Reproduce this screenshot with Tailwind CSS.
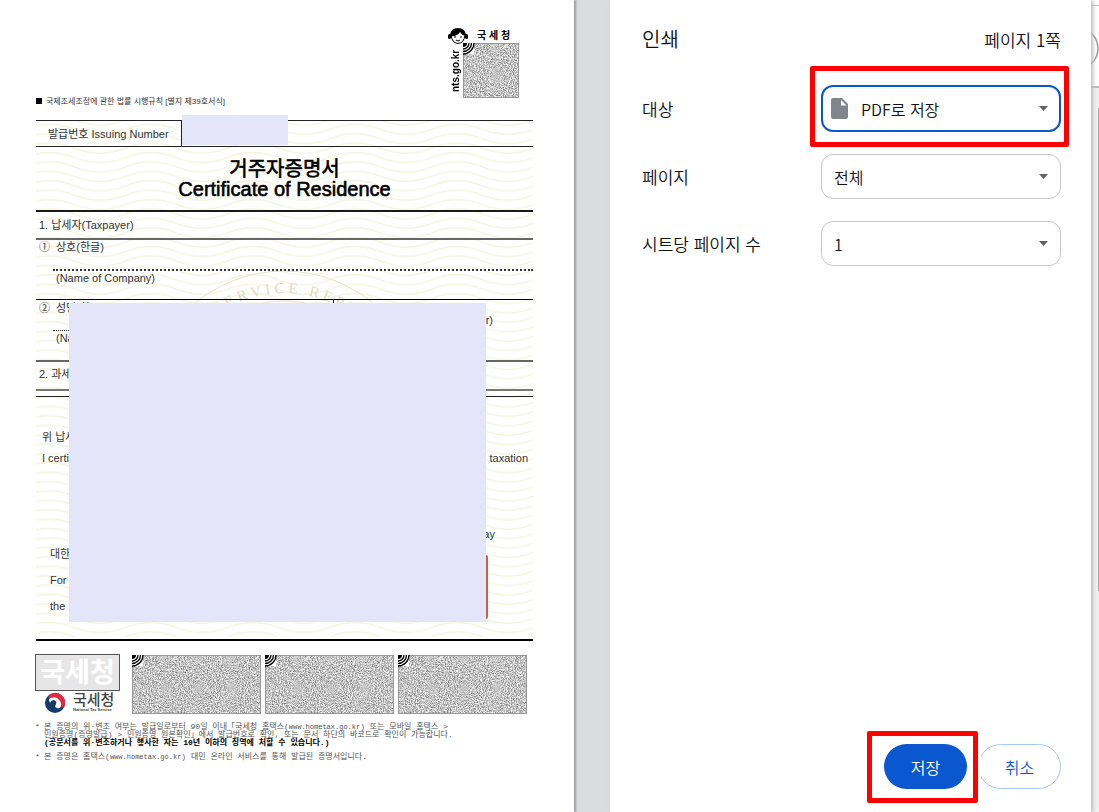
<!DOCTYPE html>
<html lang="ko">
<head>
  <meta charset="UTF-8">
  <meta name="viewport" content="width=device-width, initial-scale=1.0" />
  <script src="https://cdn.jsdelivr.net/npm/@tailwindcss/browser@4"></script>
  <title>인쇄</title>
</head>
<body class="flex min-h-screen overflow-x-hidden bg-white font-['Noto_Sans_CJK_KR',sans-serif] text-[#111]">

<svg class="absolute" width="0" height="0" aria-hidden="true">
  <defs>
    <filter id="grain" x="0" y="0" width="100%" height="100%" color-interpolation-filters="sRGB">
      <feTurbulence type="fractalNoise" baseFrequency="0.97" numOctaves="3" seed="4" />
      <feColorMatrix values="1 0 0 0 0.27  1 0 0 0 0.27  1 0 0 0 0.27  0 0 0 0 1" />
    </filter>
    <pattern id="waves" width="102" height="9.4" patternUnits="userSpaceOnUse" x="13">
      <path d="M-25.5 -9.4 Q0 -19.4 25.5 -9.4 T76.5 -9.4 T127.5 -9.4 M-25.5 0 Q0 -10 25.5 0 T76.5 0 T127.5 0 M-25.5 9.4 Q0 -.6 25.5 9.4 T76.5 9.4 T127.5 9.4 M-25.5 18.8 Q0 8.800 25.5 18.8 T76.5 18.8 T127.5 18.8" fill="none" stroke="#f5f5e2" stroke-width="1.6" />
    </pattern>
    <g id="corner">
      <rect width="11" height="11" fill="#fff" />
      <path d="M0 0H4A4 4 0 0 1 0 4Z" />
      <path d="M6 0A6 6 0 0 1 0 6M8.500 0A8.500 8.500 0 0 1 0 8.500M11 0A11 11 0 0 1 0 11" fill="none" stroke="#000" stroke-width="1.300" />
    </g>
  </defs>
</svg>

<!-- preview -->
<main class="flex flex-1 bg-[#dadce0] pr-9">
  <article class="flex-1 bg-white pr-[41px] pl-9 font-['Liberation_Sans','Noto_Sans_CJK_KR',sans-serif] text-[11px] leading-4 text-[#333] shadow-[2px_0_2px_#9a9ca0]">
    <header class="flex h-[120px] items-end justify-between">
      <p class="pb-2.5 text-[8px] leading-4"><span class="mr-1 inline-block size-1.5 bg-black"></span>국제조세조정에 관한 법률 시행규칙 [별지 제39호서식]</p>
      <div class="mr-3.5 mb-[22px] grid grid-cols-[15px_56px] grid-rows-[15px_55px] text-black">
        <svg class="col-start-1 h-4 w-5" viewBox="0 0 20 16" aria-hidden="true">
          <path d="M2 7Q3 0 10 0Q17 0 18 7Q15 9 12 4Q9 9 2 8Z" />
          <path d="M3 7Q4 15 10 15.500Q16 15 17 7" fill="none" stroke="#000" stroke-width="1" />
          <rect x="0" y="6" width="3" height="5" rx="1.500" />
          <rect x="17" y="6" width="3" height="5" rx="1.500" />
          <path d="M6 9h2M12 9h2M8 12Q10 14 12 12" fill="none" stroke="#000" stroke-width="1" />
        </svg>
        <b class="pl-3.5 text-[10px] leading-4">국 세 청</b>
        <b class="rotate-180 pt-1.5 text-[10px] leading-[15px] [writing-mode:vertical-rl]">nts.go.kr</b>
        <svg class="h-[55px] w-14" viewBox="0 0 56 55" aria-hidden="true">
          <rect width="56" height="55" filter="url(#grain)" />
          <rect x=".5" y=".5" width="55" height="54" fill="none" stroke="#999" />
          <use href="#corner" />
        </svg>
      </div>
    </header>

    <section class="relative isolate">
      <svg class="absolute inset-x-0 top-0 -z-10 h-[517px] w-full" aria-hidden="true">
        <rect width="100%" height="100%" fill="url(#waves)" />
        <g fill="none" stroke="#e6e2cc">
          <circle cx="248" cy="290" r="139" />
          <circle cx="248" cy="290" r="109" />
          <path id="ring" d="M131 290A117 117 0 0 1 365 290" stroke="none" />
        </g>
        <text fill="#e0dcc2" font-family="Liberation Serif, serif" font-size="15"><textPath href="#ring" startOffset="48%" text-anchor="middle">T A X&#160; S E R V I C E&#160;&#160; R E P U B L</textPath></text>
      </svg>

      <div class="flex h-[26px] items-center border-t border-[#222]">
        <div class="flex h-full w-[146px] items-center border-r border-[#222] pl-3">발급번호 Issuing Number</div>
        <div class="-mt-2 h-[30px] w-[106px] bg-[#e4e5f9]"></div>
      </div>
      <h1 class="h-16 border-t border-[#222] pt-3 text-center text-[20px] leading-5 text-black [-webkit-text-stroke:0.600px_black]">거주자증명서<br>Certificate of Residence</h1>
      <div class="h-7 border-t-2 border-black/90 pt-[5px] pl-[3px]">1. 납세자(Taxpayer)</div>
      <div class="h-[61px] border-t-2 border-[#666] pl-[3px]">
        <div class="-mt-px flex h-[30px] gap-1.5"><span>①</span><span>상호(한글)</span></div>
        <div class="ml-3.5 border-t-2 border-dotted border-[#333] pl-[3px] leading-3.5">(Name of Company)</div>
      </div>
      <div class="h-[61px] border-t border-black pl-[3px]">
        <div class="flex h-[30px] gap-1.5"><span>②</span><span>성명(한글)</span></div>
        <div class="mr-48 ml-3.5 border-t border-dotted border-[#333] pl-[3px] leading-3.5">(Name of Representative)</div>
      </div>
      <div class="h-[29px] border-t-2 border-[#666] pt-1 pl-[3px]">2. 과세연도</div>
      <div class="h-[7px] border-t-2 border-[#777]"></div>
      <div class="h-[243px] border-t border-[#222] pt-8 pl-1.5">
        <p>위 납세자</p>
        <div class="mt-[5px] flex justify-between pr-[5px]"><span>I certify</span><span>purpose of Korean taxation</span></div>
        <div class="mt-20 ml-2 flex flex-col gap-2.5">
          <p>대한민국</p>
          <p>For</p>
          <p>the</p>
        </div>
      </div>
      <div class="border-t-2 border-black"></div>

      <!-- masked area -->
      <span class="absolute top-48 right-10">Taxpayer)</span>
      <span class="absolute top-[406px] right-[38px]">month / day</span>
      <i class="absolute top-[179px] left-[297px] h-4 w-px bg-[#222]"></i>
      <i class="absolute top-[435px] right-[45px] h-16 w-1 rounded-sm bg-[#cf5a48]"></i>
      <div class="absolute top-[183px] right-[47px] bottom-[19px] left-[33px] bg-[#e4e5f9]"></div>
    </section>

    <footer class="-ml-px pt-[13px]">
      <div class="flex">
        <div class="w-[85px]">
          <div class="flex h-[37px] items-center justify-center border border-[#555] bg-[#e6e6e6] text-[27px] font-bold text-white">국세청</div>
          <div class="flex gap-2 pt-px pl-2.5">
            <svg class="h-[22px] w-5" viewBox="0 0 20 22" aria-hidden="true">
              <circle cx="10" cy="11" r="10" fill="#123b68" />
              <path d="M5 2.300A10 10 0 0 1 19.600 14Q18 16 16 15Q17 9 12 6Q8 4 4 7Q3 4 5 2.300Z" fill="#e02a42" />
              <path d="M4 7Q8 4 12 6Q17 9 16 14Q15 17 12 16Q9 15 11 12Q12 9 9 8Q6 8 5 11Q4 9 4 7Z" fill="#fff" />
            </svg>
            <div class="whitespace-nowrap text-[#444]">
              <p class="text-[15px] leading-4 font-medium">국세청</p>
              <p class="text-[4px] leading-1 font-bold">National Tax Service</p>
            </div>
          </div>
        </div>
        <div class="flex gap-1 pt-px pl-3">
          <svg class="h-[59px] w-[129px]" viewBox="0 0 129 59" aria-hidden="true"><rect width="129" height="59" filter="url(#grain)" /><rect x=".5" y=".5" width="128" height="58" fill="none" stroke="#999" /><use href="#corner" /></svg>
          <svg class="h-[59px] w-[129px]" viewBox="0 0 129 59" aria-hidden="true"><rect width="129" height="59" filter="url(#grain)" /><rect x=".5" y=".5" width="128" height="58" fill="none" stroke="#999" /><use href="#corner" /></svg>
          <svg class="h-[59px] w-[129px]" viewBox="0 0 129 59" aria-hidden="true"><rect width="129" height="59" filter="url(#grain)" /><rect x=".5" y=".5" width="128" height="58" fill="none" stroke="#999" /><use href="#corner" /></svg>
        </div>
      </div>
      <div class="grid grid-cols-[9px_1fr] pt-[9px] font-['Liberation_Mono','Noto_Sans_CJK_KR',monospace] text-[8px] leading-2 whitespace-nowrap text-[#555]">
        <span>*</span>
        <div>
          <p>본 증명의 위·변조 여부는 발급일로부터 90일 이내「국세청 홈택스(<span class="text-[7px]">www.hometax.go.kr</span>) 또는 모바일 홈택스 &gt;</p>
          <p>민원증명(증명발급) &gt; 민원증명 원본확인」에서 발급번호로 확인, 또는 문서 하단의 바코드로 확인이 가능합니다.</p>
          <p class="font-bold text-black">(공문서를 위·변조하거나 행사한 자는 10년 이하의 징역에 처할 수 있습니다.)</p>
        </div>
        <span class="pt-1.5">*</span>
        <p class="pt-1.5">본 증명은 홈택스(<span class="text-[7px]">www.hometax.go.kr</span>) 대민 온라인 서비스를 통해 발급된 증명서입니다.</p>
      </div>
    </footer>
  </article>
</main>

<!-- print settings -->
<aside class="relative z-10 flex w-[481px] shrink-0 flex-col bg-white pr-[30px] pb-[23px] pl-8 shadow-[2px_0_4px_#bbb]">
  <header class="flex h-[85px] items-start justify-between pt-6">
    <h2 class="text-[20px] leading-[30px] font-[350]">인쇄</h2>
    <span class="text-[17px] leading-8 font-[350]">페이지 1쪽</span>
  </header>
  <form class="flex flex-1 flex-col gap-[22px] text-[16px] font-[350]">
    <div class="flex items-center justify-between">
      <label for="target" class="text-[17px]">대상</label>
      <div class="relative h-[47px] w-60">
        <select id="target" class="h-full w-full appearance-none rounded-xl border-2 border-[#0b57d0] bg-white pl-[38px] outline-none"><option>PDF로 저장</option></select>
        <svg class="pointer-events-none absolute top-[13px] left-2.5 h-[21px] w-[17px]" viewBox="0 0 17 21" aria-hidden="true"><path d="M2 0H11L17 6V19Q17 21 15 21H2Q0 21 0 19V2Q0 0 2 0Z" fill="#80868b" /><path d="M10 2V7.500H15.500Z" fill="#fff" /></svg>
        <svg class="pointer-events-none absolute top-[21px] right-[13px] h-[5px] w-[9px]" viewBox="0 0 9 5" aria-hidden="true"><path d="M0 0H9L4.500 5Z" fill="#5f6368" /></svg>
        <div class="pointer-events-none absolute -top-[19px] -right-2 -bottom-[15px] -left-[11px] rounded-xs border-5 border-[#f00]"></div>
      </div>
    </div>
    <div class="flex items-center justify-between">
      <label for="pages" class="text-[17px]">페이지</label>
      <div class="relative h-[45px] w-60">
        <select id="pages" class="h-full w-full appearance-none rounded-xl border border-[#c7c7c7] bg-white pl-3 outline-none"><option>전체</option></select>
        <svg class="pointer-events-none absolute top-5 right-[13px] h-[5px] w-[9px]" viewBox="0 0 9 5" aria-hidden="true"><path d="M0 0H9L4.500 5Z" fill="#5f6368" /></svg>
      </div>
    </div>
    <div class="flex items-center justify-between">
      <label for="per-sheet" class="text-[17px]">시트당 페이지 수</label>
      <div class="relative h-[45px] w-60">
        <select id="per-sheet" class="h-full w-full appearance-none rounded-xl border border-[#c7c7c7] bg-white pl-3 outline-none"><option>1</option></select>
        <svg class="pointer-events-none absolute top-5 right-[13px] h-[5px] w-[9px]" viewBox="0 0 9 5" aria-hidden="true"><path d="M0 0H9L4.500 5Z" fill="#5f6368" /></svg>
      </div>
    </div>
    <div class="mt-auto flex justify-end gap-[11px]">
      <div class="relative z-10">
        <button type="button" class="h-[45px] w-[83px] rounded-full bg-[#0b57d0] text-white">저장</button>
        <div class="pointer-events-none absolute -top-[13px] -right-[11px] -bottom-3.5 -left-[17px] rounded-xs border-5 border-[#f00] shadow-[3px_0_0_#fff]"></div>
      </div>
      <button type="button" class="h-[45px] w-[83px] rounded-full border border-[#a8c7fa] text-[#0b57d0]">취소</button>
    </div>
  </form>
</aside>

<!-- page behind the dialog -->
<div class="w-2 shrink-0 overflow-hidden bg-[#f1f1f1]">
  <div class="h-[88px] border-b-2 border-[#bbb] bg-white pt-[5px]">
    <svg class="h-[70px] w-2 border-t border-[#bbb]" viewBox="0 0 8 70" aria-hidden="true"><circle cx="-14" cy="43" r="21" fill="none" stroke="#999" stroke-width="1.500" /></svg>
  </div>
  <div class="mt-5 ml-[7px] h-[483px] bg-[#aaa]"></div>
</div>
</body>
</html>
